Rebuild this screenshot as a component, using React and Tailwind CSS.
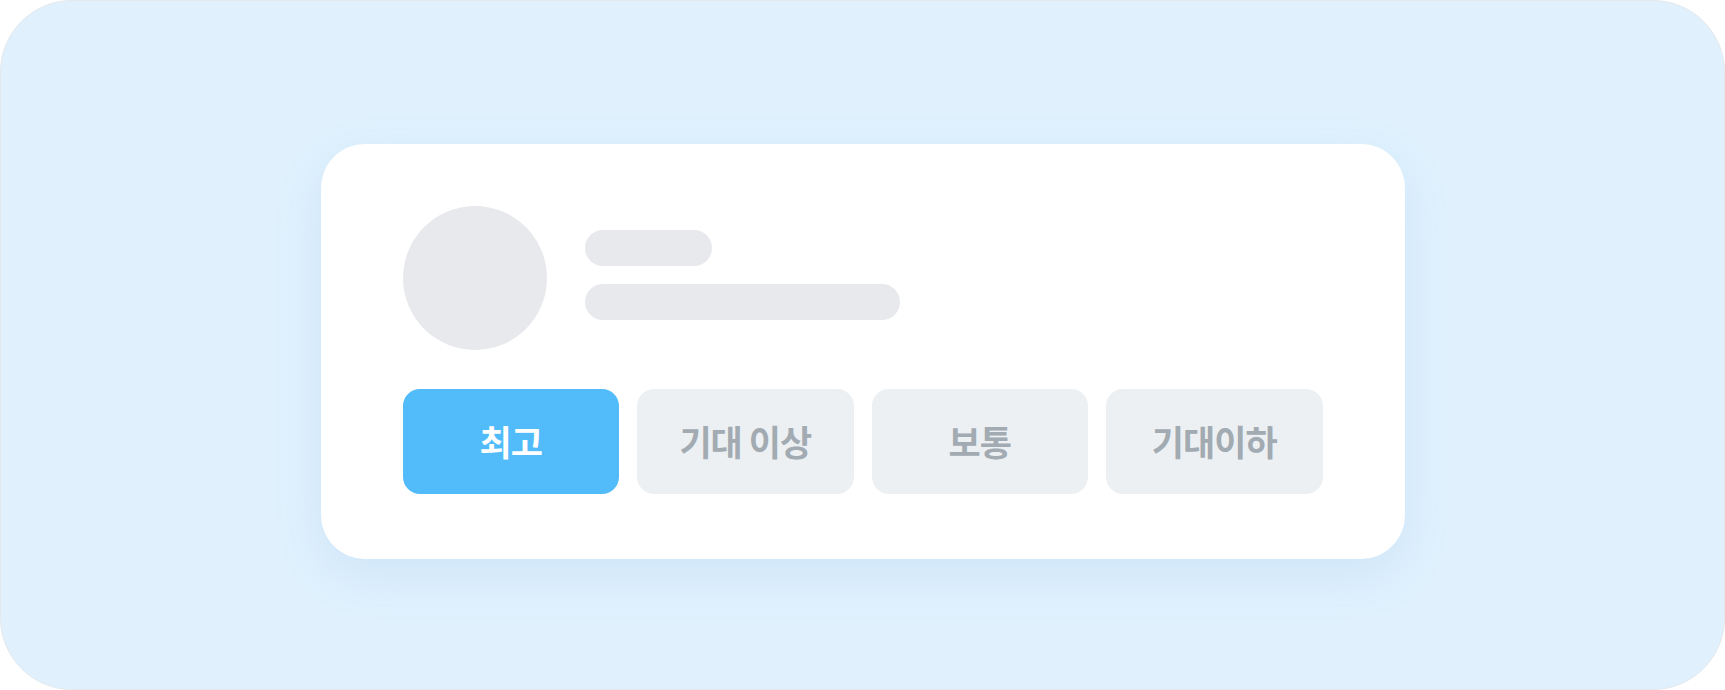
const ratings = ["최고", "기대 이상", "보통", "기대이하"];

function Skeleton() {
  return (
    <div className="flex items-center gap-[38px]">
      <div className="w-[144px] h-[144px] rounded-full bg-[#e7e9ec]" />
      <div className="flex flex-col gap-[18px] -mt-[6px]">
        <div className="w-[127px] h-[36px] rounded-full bg-[#e7e9ec]" />
        <div className="w-[315px] h-[36px] rounded-full bg-[#e7e9ec]" />
      </div>
    </div>
  );
}

export default function App() {
  const selected = 0;
  return (
    <div className="w-full h-[690px] bg-white font-['Noto_Sans_CJK_KR','Noto_Sans',sans-serif]">
      <div className="w-full h-full flex justify-center pt-[143px] bg-[#e0f1fd] border border-[#e4e8ec] rounded-[72px]">
        <div className="w-[1084px] h-[415px] bg-white rounded-[44px] px-[82px] pt-[62px] shadow-[0_16px_50px_rgba(70,150,210,0.12)]">
          <Skeleton />
          <div className="grid grid-cols-4 gap-[18px] mt-[39px]">
            {ratings.map((label, i) => (
              <button
                key={label}
                className={`h-[105px] rounded-[17px] flex items-center justify-center text-[35px] font-bold tracking-[-1px] ${
                  i === selected ? "bg-[#52bcfa] text-white" : "bg-[#ecf0f3] text-[#a2aab2]"
                }`}
              >
                {label}
              </button>
            ))}
          </div>
        </div>
      </div>
    </div>
  );
}
